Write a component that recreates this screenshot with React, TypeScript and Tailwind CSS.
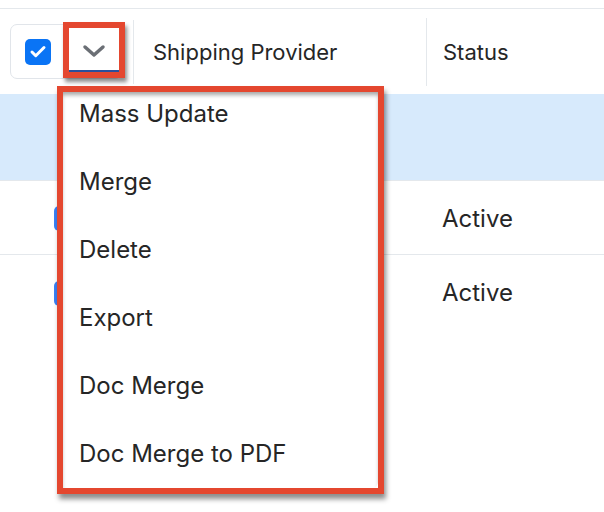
import { Check } from 'lucide-react'

const actions = ['Mass Update', 'Merge', 'Delete', 'Export', 'Doc Merge', 'Doc Merge to PDF']

function Chevron() {
  return (
    <svg width="24" height="16" viewBox="0 0 24 16" fill="none">
      <path d="M3 4l9 8 9-8" stroke="#6b6f75" strokeWidth="3.5" strokeLinecap="round" strokeLinejoin="round" />
    </svg>
  )
}

function RowCheckbox() {
  return (
    <div className="flex h-[25px] w-[25px] items-center justify-center rounded-[5px] bg-[#3b82f6]">
      <Check className="h-4 w-4 text-white" strokeWidth={3.5} />
    </div>
  )
}

export default function App() {
  return (
    <div className="relative h-[512px] w-[604px] overflow-hidden bg-white font-['Inter',sans-serif] text-[24px] text-[#262626]">
      <div className="h-2" />
      {/* header */}
      <div className="flex h-[86px] items-center border-t border-[#e4e8ec] text-[22px]">
        <div className="flex w-[133px] items-center pl-[10px]">
          <div className="flex h-[55px] w-[112px] items-center rounded-[7px] border border-[#e1e5ea] pl-[14px]">
            <div className="flex h-[26px] w-[26px] items-center justify-center rounded-[5px] bg-[#0a74f5]">
              <Check className="h-[18px] w-[18px] text-white" strokeWidth={4} />
            </div>
          </div>
        </div>
        <div className="h-[64px] w-px bg-[#e4e8ec]" />
        <div className="w-[292px] pl-[19px] pt-[2px]">Shipping Provider</div>
        <div className="h-[68px] w-px bg-[#e4e8ec]" />
        <div className="pl-4 pt-[2px]">Status</div>
      </div>
      {/* selected row */}
      <div className="h-[87px] border-b border-[#e4e8ec] bg-[#d7eafc]" />
      {/* rows */}
      {[0, 1].map((i) => (
        <div key={i} className={`flex h-[74px] items-center pt-[2px] ${i === 0 ? 'border-b border-[#e4e8ec]' : ''}`}>
          <div className="w-[442px] pl-[54px]">
            <RowCheckbox />
          </div>
          <div>Active</div>
        </div>
      ))}

      {/* dropdown toggle, annotated */}
      <div className="absolute left-[63px] top-[22px] flex h-[56px] w-[62px] items-center justify-center border-[6px] border-[#e4472f] bg-white shadow-[2px_4px_4px_rgba(0,0,0,0.45)]">
        <div className="flex h-full w-full items-center justify-center border-b-2 border-[#2a4f9c] pt-[3px]">
          <Chevron />
        </div>
      </div>

      {/* action menu, annotated */}
      <div className="absolute left-[57px] top-[86px] h-[408px] w-[327px] border-[6px] border-[#e4472f] shadow-[2px_5px_5px_rgba(0,0,0,0.45)]">
        <div className="h-full w-full overflow-hidden rounded-br-[6px] bg-white shadow-[inset_0_4px_4px_-1px_rgba(0,0,0,0.35)]">
          <div className="-mt-[12px]">
            {actions.map((a) => (
              <div key={a} className="flex h-[68px] items-center pl-4">
                {a}
              </div>
            ))}
          </div>
        </div>
      </div>
    </div>
  )
}
